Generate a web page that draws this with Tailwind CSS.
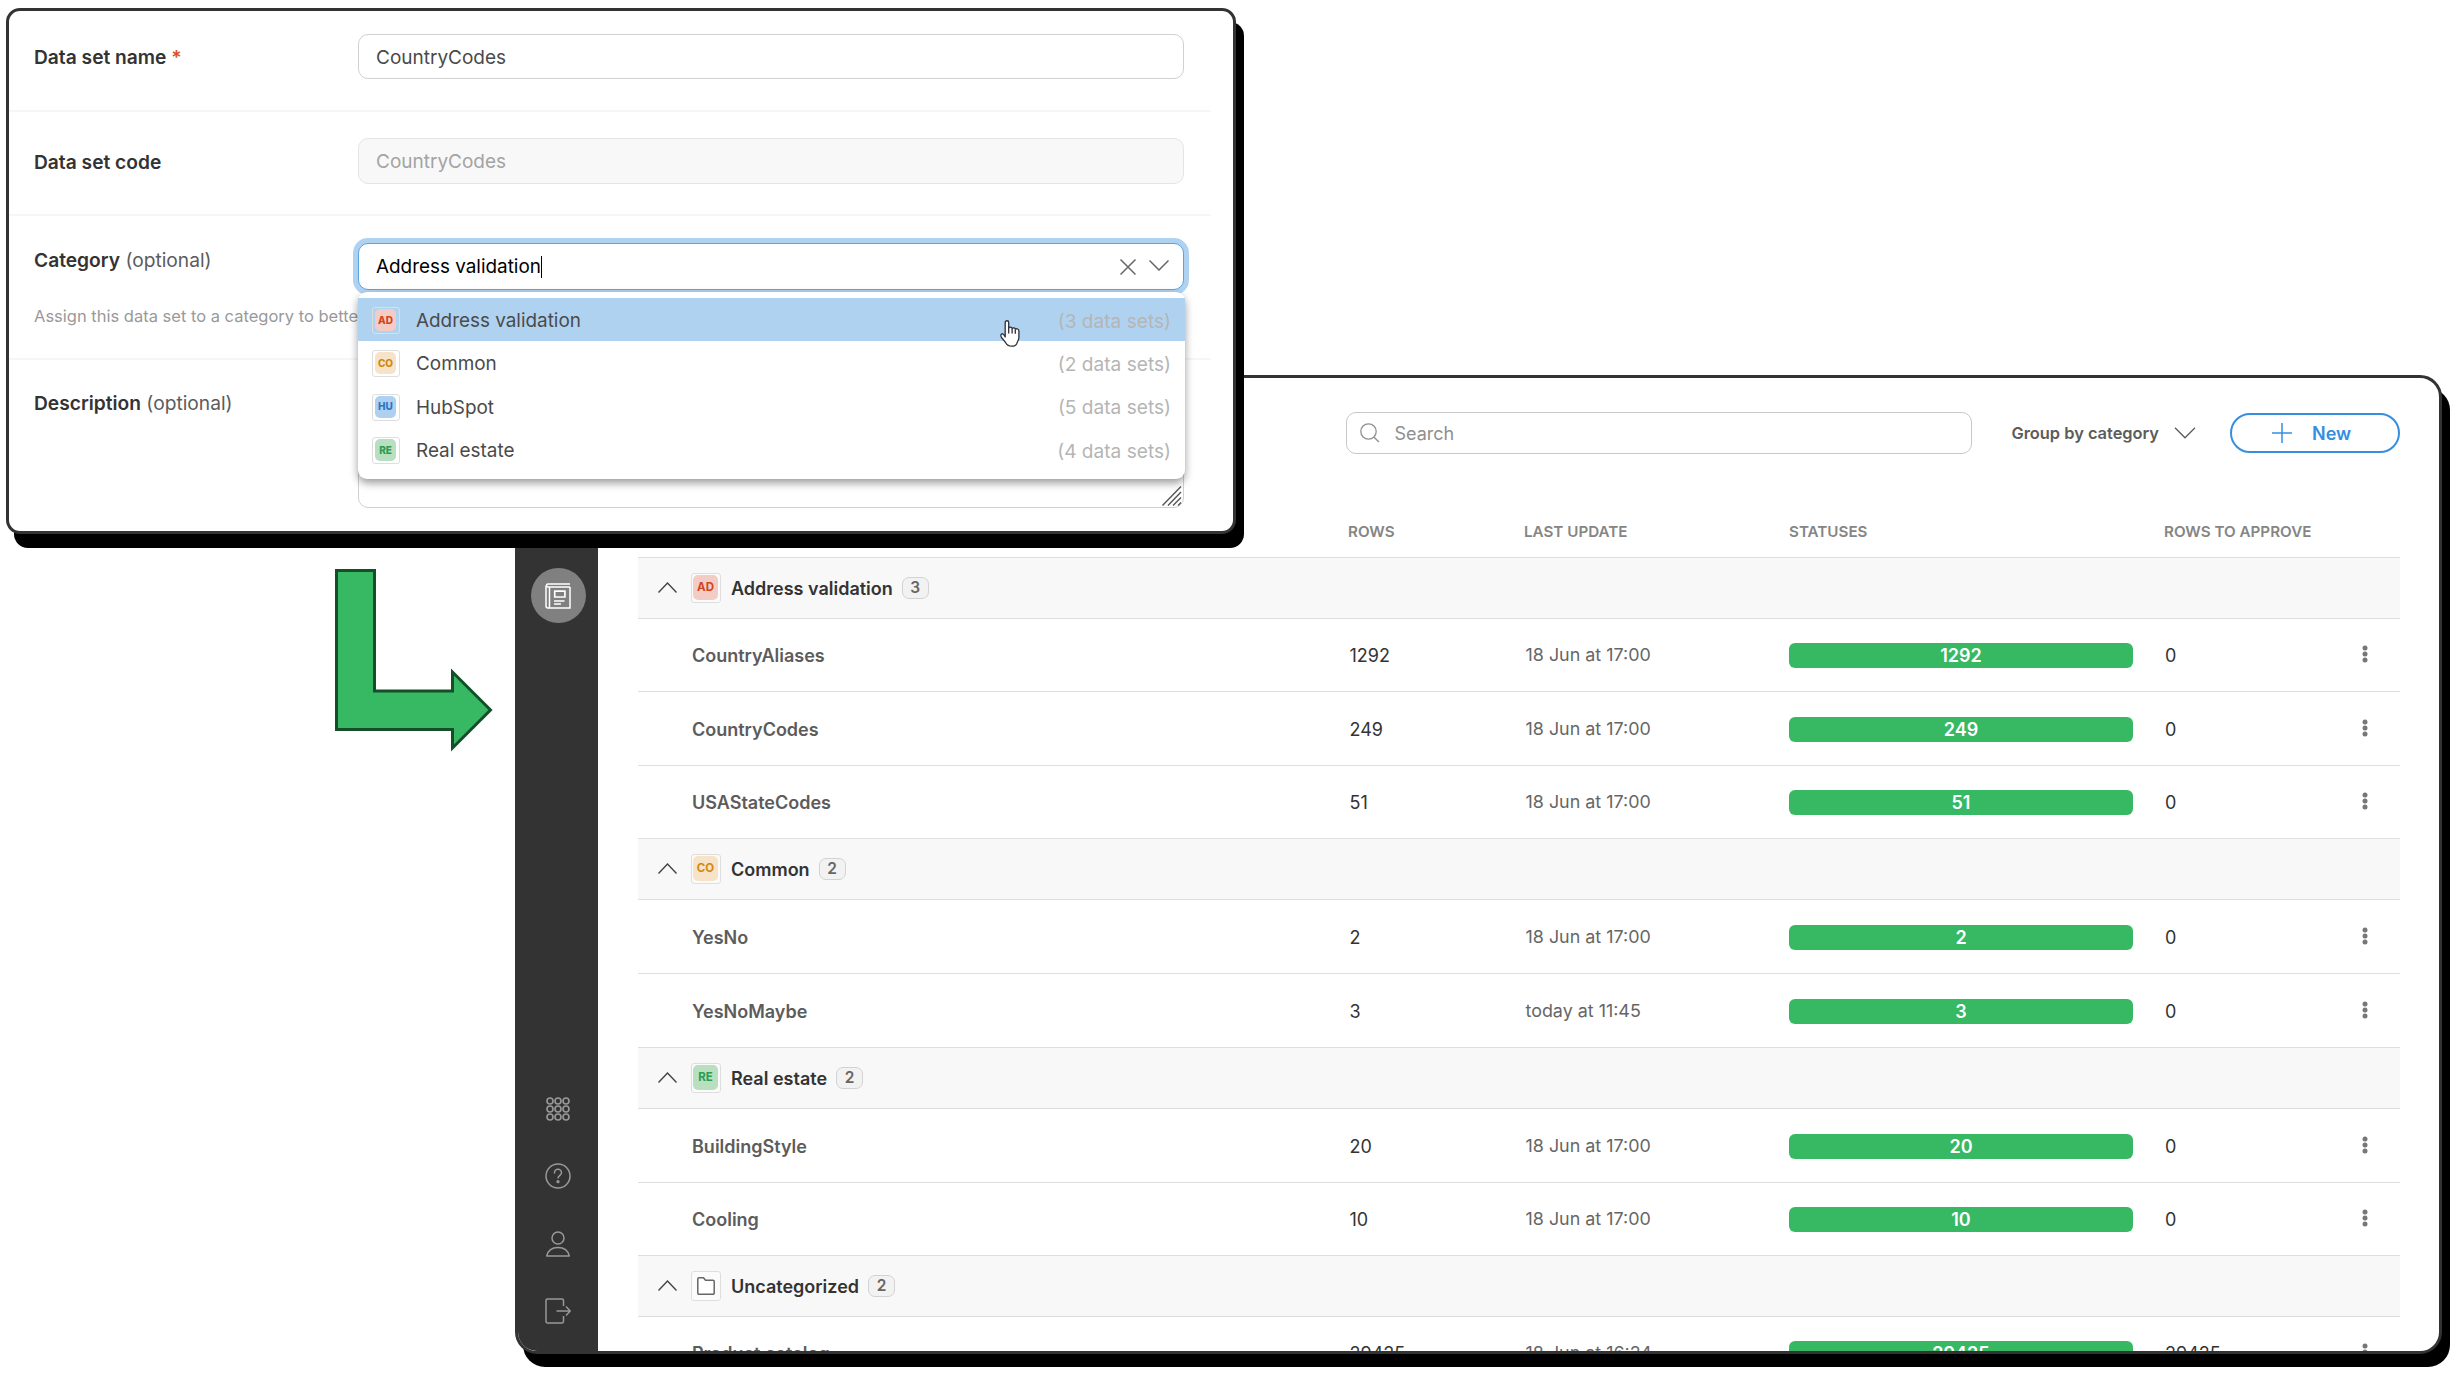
<!DOCTYPE html>
<html lang="en">
	<head>
		<meta charset="UTF-8" />
		<title>Data sets</title>
		<script src="https://cdn.jsdelivr.net/npm/@tailwindcss/browser@4"></script>
	</head>
	<body
		class="relative w-[2459px] h-[1376px] overflow-hidden bg-white font-['Inter',sans-serif] text-[#333333]"
	>
		<!-- Data sets window -->
		<div
			class="absolute left-[515px] top-[375px] w-[1927px] h-[979px] flex overflow-hidden bg-white border-[3px] border-[#333333] rounded-[22px] shadow-[8px_13px_0_0_#000000]"
		>
			<!-- Sidebar -->
			<div
				class="w-20 shrink-0 bg-[#333333] flex flex-col items-center justify-between pt-[190px] pb-[27px] text-[#999999]"
			>
				<div
					class="w-[55px] h-[55px] rounded-full bg-[#808080] flex items-center justify-center text-white"
				>
					<svg viewBox="0 0 26 26" class="w-[26px] h-[26px]" fill="none" stroke="currentColor" stroke-width="1.5">
						<path d="M25 4H3a1.500 1.500 0 0 1 0-3h22M25 4v21H3A2 2 0 0 1 1 23V2.500M4.500 4v21" />
						<path d="M9.700 8.200h10.200v5.800H9.700zM9 18h10.500M9 21h7" stroke-width="1.7" />
					</svg>
				</div>
				<div class="flex flex-col items-center gap-[41.300px]">
					<svg viewBox="0 0 26 26" class="w-[26px] h-[26px]" fill="none" stroke="currentColor" stroke-width="1.6">
						<circle cx="5" cy="5" r="3" /><circle cx="13" cy="5" r="3" /><circle cx="21" cy="5" r="3" />
						<circle cx="5" cy="13" r="3" /><circle cx="13" cy="13" r="3" /><circle cx="21" cy="13" r="3" />
						<circle cx="5" cy="21" r="3" /><circle cx="13" cy="21" r="3" /><circle cx="21" cy="21" r="3" />
					</svg>
					<svg viewBox="0 0 26 26" class="w-[26px] h-[26px]" fill="none" stroke="currentColor" stroke-width="1.5">
						<circle cx="13" cy="13" r="12" />
						<path d="M9.500 10.500V9.800a3.500 3.500 0 0 1 7 0c0 2.600-3.500 2.600-3.500 5.700" />
						<circle cx="13" cy="18.700" r="0.900" fill="currentColor" />
					</svg>
					<svg viewBox="0 0 26 26" class="w-[26px] h-[26px]" fill="none" stroke="currentColor" stroke-width="1.5">
						<circle cx="13" cy="7" r="6" />
						<path d="M1.700 25C3 19.500 7.500 16.500 13 16.500S23 19.500 24.300 25Z" stroke-linejoin="round" />
					</svg>
					<svg viewBox="0 0 26 26" class="w-[26px] h-[26px]" fill="none" stroke="currentColor" stroke-width="1.5">
						<path d="M18.500 8V2.500A1.500 1.500 0 0 0 17 1H2.500A1.500 1.500 0 0 0 1 2.500v21A1.500 1.500 0 0 0 2.500 25H17a1.500 1.500 0 0 0 1.500-1.500V18M11.500 13H25M21 8.500l4.300 4.500-4.300 4.500" />
					</svg>
				</div>
			</div>

			<!-- Content -->
			<div class="w-[1762px] ml-10 flex flex-col">
				<div class="flex items-center justify-end h-[42px] mt-[34px] shrink-0">
					<div
						class="w-[626px] h-[42px] border border-[#c8c8c8] rounded-[10px] flex items-center pl-[13px] gap-[14px] text-[#8f8f8f] text-[18px]"
					>
						<svg viewBox="0 0 20 20" class="w-5 h-5 -mt-px" fill="none" stroke="currentColor" stroke-width="1.300">
							<circle cx="8.500" cy="8.500" r="7.700" />
							<path d="M14 14.200 19 19" />
						</svg>
						<span>Search</span>
					</div>
					<div class="flex items-center ml-[39px] gap-[15px] text-[16.400px] font-semibold text-[#5c5c5c]">
						<span>Group by category</span>
						<svg viewBox="0 0 22 12" class="w-[22px] h-3" fill="none" stroke="currentColor" stroke-width="1.300">
							<path d="m1 .8 10 10 10-10" />
						</svg>
					</div>
					<div
						class="ml-[34px] w-[170px] h-10 rounded-full border-2 border-[#368ee0] text-[#368ee0] flex items-center pl-[40px] gap-[20px] text-[18px] font-semibold"
					>
						<svg viewBox="0 0 20 20" class="w-5 h-5" fill="none" stroke="currentColor" stroke-width="1.500">
							<path d="M10 0v20M0 10h20" />
						</svg>
						<span>New</span>
					</div>
				</div>

				<div
					class="grid grid-cols-[710px_176px_265px_375px_1fr] h-[50px] mt-[53px] shrink-0 items-center text-[15.200px] font-semibold text-[#858585]"
				>
					<span class="col-start-2">ROWS</span>
					<span>LAST UPDATE</span>
					<span>STATUSES</span>
					<span>ROWS TO APPROVE</span>
				</div>

				<div id="groups"></div>
			</div>
		</div>

		<!-- Arrow between the windows -->
		<svg
			viewBox="0 0 170 190"
			class="absolute left-[330px] top-[565px] w-[170px] h-[190px]"
			fill="#37b863"
			stroke="#144f29"
			stroke-width="3"
		>
			<path d="M6.500 5.500H44.500V126H122.500V107L160.500 145 122.500 183V164.500H6.500Z" />
		</svg>

		<!-- Edit form window -->
		<div
			class="absolute left-[6px] top-[8px] w-[1230px] h-[526px] bg-white border-[3px] border-[#333333] rounded-[14px] shadow-[8px_14px_0_0_#000000] text-[19px]"
		>
			<div class="mr-[22px] h-[101px] flex items-start border-b-2 border-[#f6f6f6]">
				<label class="w-[349px] pl-[25px] pt-[34px] font-semibold leading-6 text-[19.200px]">Data set name <span class="text-[#d9502e]">*</span></label>
				<div class="mt-[23px] w-[826px] h-[45px] border border-[#d0d0d0] rounded-[10px] flex items-center px-[17px] pt-[3px] text-[#4a4a4a]">
					CountryCodes
				</div>
			</div>
			<div class="mr-[22px] h-[104px] flex items-start border-b-2 border-[#f6f6f6]">
				<label class="w-[349px] pl-[25px] pt-[38px] font-semibold leading-6 text-[19.200px]">Data set code</label>
				<div class="mt-[26px] w-[826px] h-[46px] border border-[#e4e4e4] bg-[#f8f8f8] rounded-[10px] flex items-center px-[17px] pt-[3px] text-[#a3a3a3]">
					CountryCodes
				</div>
			</div>
			<div class="mr-[22px] h-[144px] flex items-start border-b-2 border-[#f6f6f6]">
				<div class="w-[349px] pl-[25px] pt-[32px]">
					<label class="block leading-6 text-[19.200px]"><b class="font-semibold">Category</b> <span class="text-[#5c5c5c]">(optional)</span></label>
					<p class="mt-8 leading-6 text-[16.500px] text-[#999999] whitespace-nowrap">
						Assign this data set to a category to better
					</p>
				</div>
				<div class="relative mt-[27px] w-[826px] h-[47px] bg-white border border-[#5ca3e2] rounded-[10px] ring-[5px] ring-[#b0d2f1] flex items-center px-[17px] text-black">
					<span class="pt-[2px] text-[18.900px]">Address validation</span>
					<span class="w-px h-[22px] mt-px bg-black"></span>
					<div class="ml-auto -mr-[3px] flex items-center gap-[13px] text-[#666666]">
						<svg viewBox="0 0 16 16" class="w-4 h-4" fill="none" stroke="currentColor" stroke-width="1.500">
							<path d="m.5.5 15 15M15.500.5l-15 15" />
						</svg>
						<svg viewBox="0 0 20 11" class="w-5 h-[11px] -mt-[3px]" fill="none" stroke="currentColor" stroke-width="1.500">
							<path d="m.5.5 9.500 9.500L19.500.5" />
						</svg>
					</div>

					<!-- Dropdown -->
					<div
						id="options"
						class="absolute z-10 left-[-1px] top-[48px] w-[827px] h-[187px] pt-[6px] bg-white rounded-[9px] shadow-[0_4px_9px_rgba(0,0,0,0.4)] text-[18.900px] text-[#4a4a4a]"
					></div>

					<!-- Pointer -->
					<svg
						viewBox="0 0 20 27"
						class="absolute z-20 left-[641px] top-[76px] w-5 h-[27px]"
						fill="white"
						stroke="#2e2e3a"
						stroke-width="1.300"
						stroke-linejoin="round"
					>
						<path d="M5.200 17V2.500a1.700 1.700 0 0 1 3.500 0V8c.8-1.200 3-1 3.400.4 1-.9 2.800-.6 3.200.7 1.300-.8 3.600-.2 3.600 2v6.500c0 2.500-1.400 3.600-2 5.600-.7 1.900-2.700 3-5 3-3.200 0-5-1.200-6.200-3.500L1.500 17.500c-1.500-2.500 0-4.500 1.500-3.500 1 .7 1.500 1.500 2.200 3Z" />
						<path d="M8.700 8v5.500M12.100 8.400v5.200M15.300 9.500v4.300" fill="none" />
					</svg>
				</div>
			</div>
			<div class="flex items-start">
				<label class="w-[349px] pl-[25px] pt-[31px] leading-6 text-[19.200px]"><b class="font-semibold">Description</b> <span class="text-[#5c5c5c]">(optional)</span></label>
				<div class="mt-[20px] w-[826px] h-[128px] border border-[#d0d0d0] rounded-[10px] flex items-end justify-end">
					<svg viewBox="0 0 20 20" class="w-5 h-5 mr-px mb-px" fill="none" stroke="#555555" stroke-width="1.400">
						<path d="M.5 19.500 19 .5M6 19.500 19 6M11 19.500l8-8M16 19.500l3-3" />
					</svg>
				</div>
			</div>
		</div>

		<script>
			const badges = {
				AD: "bg-[#f3cdc5] text-[#cf4520]",
				CO: "bg-[#f7e3c8] text-[#cf8a10]",
				HU: "bg-[#aed0f1] text-[#2f77bf]",
				RE: "bg-[#b7dfc0] text-[#2b9c50]",
			};

			const options = [
				["AD", "Address validation", 3],
				["CO", "Common", 2],
				["HU", "HubSpot", 5],
				["RE", "Real estate", 4],
			];

			// rows: name, rows, last update, rows to approve, row height
			const groups = [
				{
					code: "AD",
					title: "Address validation",
					count: 3,
					rows: [
						["CountryAliases", 1292, "18 Jun at 17:00", 0, 73],
						["CountryCodes", 249, "18 Jun at 17:00", 0, 74],
						["USAStateCodes", 51, "18 Jun at 17:00", 0, 73],
					],
				},
				{
					code: "CO",
					title: "Common",
					count: 2,
					rows: [
						["YesNo", 2, "18 Jun at 17:00", 0, 74],
						["YesNoMaybe", 3, "today at 11:45", 0, 74],
					],
				},
				{
					code: "RE",
					title: "Real estate",
					count: 2,
					rows: [
						["BuildingStyle", 20, "18 Jun at 17:00", 0, 74],
						["Cooling", 10, "18 Jun at 17:00", 0, 73],
					],
				},
				{
					code: "",
					title: "Uncategorized",
					count: 2,
					rows: [["Product catalog", 29425, "18 Jun at 16:24", 29425, 72]],
				},
			];

			const folder = `
				<svg viewBox="0 0 18 18" class="w-[18px] h-[18px] ml-1 mt-1" fill="#ffffff" stroke="#666666" stroke-width="1.500" stroke-linejoin="round">
					<path d="M.8 2A1.200 1.200 0 0 1 2 .8h4.500l2 2.500H16A1.200 1.200 0 0 1 17.200 4.500V16A1.200 1.200 0 0 1 16 17.200H2A1.200 1.200 0 0 1 .8 16Z" />
				</svg>`;

			document.getElementById("options").innerHTML = options
				.map(
					([code, title, count], i) => `
				<div class="flex items-center h-[43.300px] pl-[14px] pr-[14px] pt-[2px] ${i === 0 ? "bg-[#b0d2f1]" : ""}">
					<div class="w-7 h-[27px] border border-[#dedede] rounded-[3px] p-[2px] pt-px">
						<div class="w-[21px] h-[22px] rounded-[5px] flex items-center justify-center text-[10px] font-extrabold ${badges[code]}">${code}</div>
					</div>
					<span class="ml-4 pt-px">${title}</span>
					<span class="ml-auto pt-px text-[19.100px] text-[#b5b5b5]">(${count} data sets)</span>
				</div>`
				)
				.join("");

			document.getElementById("groups").innerHTML = groups
				.map(
					(g) => `
				<div class="h-[61px] border-t border-[#dedede] bg-[#f8f8f8] flex items-center pl-5">
					<svg viewBox="0 0 19 11" class="w-[19px] h-[11px] -mt-[2px]" fill="none" stroke="#444444" stroke-width="1.400">
						<path d="m.5 10.500 9-9.500 9 9.500" />
					</svg>
					<div class="ml-[14px] w-[30px] h-[30px] border border-[#dedede] rounded-[3px] bg-[#fbfbfb] p-px">
						${
							g.code
								? `<div class="w-[25px] h-[25px] rounded-[5px] flex items-center justify-center pt-px text-[11.500px] font-bold ${badges[g.code]}">${g.code}</div>`
								: folder
						}
					</div>
					<span class="ml-[10px] text-[18px] font-semibold">${g.title}</span>
					<span class="ml-[9px] w-[27px] h-[22px] rounded-[7px] border border-[#d2d2d2] bg-[#f2f2f2] flex items-center justify-center text-[15.500px] font-semibold text-[#666666]">${g.count}</span>
				</div>
				${g.rows
					.map(
						([name, rows, updated, approve, height]) => `
				<div class="grid grid-cols-[657.500px_176px_263.500px_344px_1fr] items-center pl-[54px] pt-px border-t border-[#dedede] text-[18px]" style="height: ${height}px">
					<span class="font-semibold text-[#5c5c5c]">${name}</span>
					<span>${rows}</span>
					<span class="text-[#666666] text-[17.900px]">${updated}</span>
					<span class="h-[25px] rounded-[6px] bg-[#37b863] text-white font-semibold flex items-center justify-center">${rows}</span>
					<span class="pl-8 pr-[32px] flex items-center justify-between">
						<span>${approve}</span>
						<svg viewBox="0 0 6 18" class="w-[6px] h-[18px] -mt-[3px]" fill="#777777">
							<circle cx="3" cy="3" r="2.500" />
							<circle cx="3" cy="9" r="2.500" />
							<circle cx="3" cy="15" r="2.500" />
						</svg>
					</span>
				</div>`
					)
					.join("")}`
				)
				.join("");
		</script>
	</body>
</html>
